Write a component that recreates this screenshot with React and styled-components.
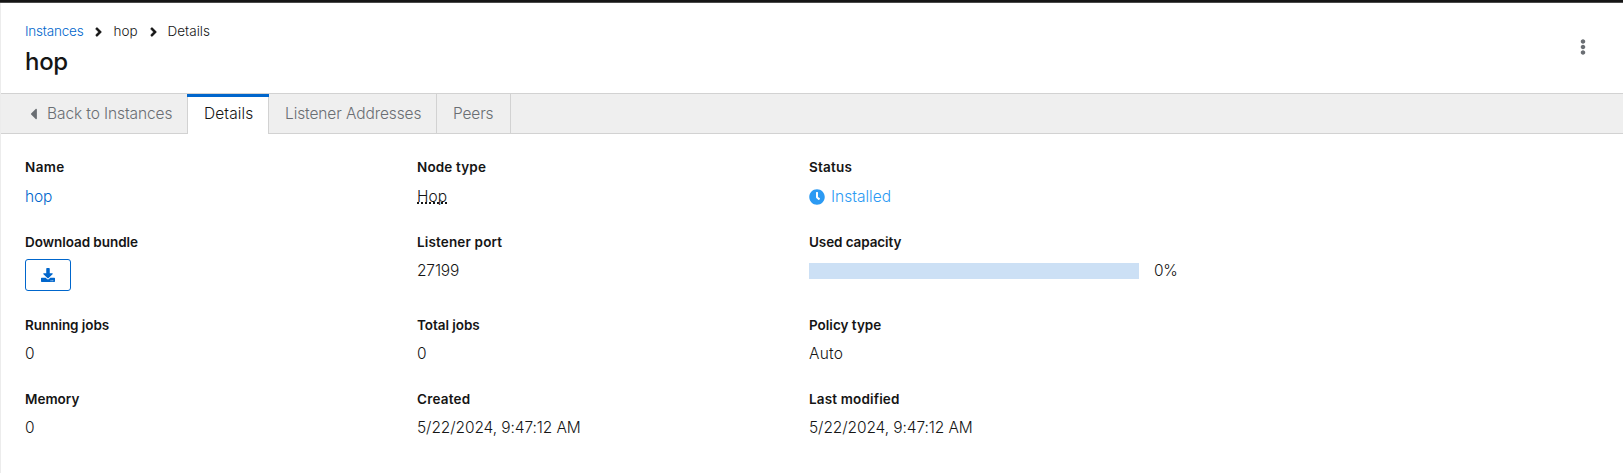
import React from 'react';
import styled, { createGlobalStyle } from 'styled-components';
import { FaAngleRight, FaCaretLeft, FaClock, FaDownload, FaEllipsisV } from 'react-icons/fa';

const GlobalStyle = createGlobalStyle`
  *, *::before, *::after { box-sizing: border-box; }
  body {
    margin: 0;
    background: #fff;
    color: #151515;
    font-family: Inter, "Liberation Sans", sans-serif;
    overflow: hidden;
  }
`;

const Page = styled.div`
  display: flex;
  flex-direction: column;
  height: 473px;
`;

const Masthead = styled.div`
  flex: none;
  height: 3px;
  background: #151515;
  border-bottom: 1px solid #4a4a4a;
`;

const Main = styled.main`
  flex: 1;
  border-left: 1px solid #ececec;
`;

const Header = styled.header`
  display: flex;
  justify-content: space-between;
  align-items: flex-start;
  height: 90px;
  padding: 18px 32px 0 24px;
`;

const Breadcrumb = styled.nav`
  display: flex;
  align-items: center;
  height: 21px;
  font-size: 13.5px;
  font-weight: 360;
  line-height: 21px;
`;

const Crumb = styled.span`
  color: ${({ $link }) => ($link ? '#06c' : '#151515')};
  letter-spacing: ${({ $track = 0 }) => $track}px;
`;

const Divider = styled(FaAngleRight)`
  width: 9px;
  height: 14px;
  margin: 0 ${({ $right }) => $right}px 0 ${({ $left }) => $left}px;
  stroke: #151515;
  stroke-width: 16;
`;

const Title = styled.h1`
  margin: 4px 0 0;
  font-size: 24px;
  font-weight: 450;
  line-height: 31px;
  letter-spacing: -0.3px;
`;

const KebabButton = styled.button`
  display: flex;
  margin-top: 18px;
  padding: 0;
  border: 0;
  background: none;
  color: #6a6e73;
  font-size: 16px;
`;

const Tabs = styled.div`
  display: flex;
  height: 41px;
  background: #efefef;
  border-top: 1px solid #d2d2d2;
  box-shadow: inset 0 -1px #d2d2d2;
`;

const Tab = styled.a`
  position: relative;
  display: flex;
  align-items: center;
  width: ${({ $width }) => $width}px;
  padding: 0 0 1px ${({ $indent = 16 }) => $indent}px;
  border-right: 1px solid #d2d2d2;
  color: ${({ $active }) => ($active ? '#151515' : '#6a6e73')};
  background: ${({ $active }) => ($active ? '#fff' : 'transparent')};
  font-size: 15.5px;
  font-weight: 300;
  letter-spacing: ${({ $track = 0 }) => $track}px;
  white-space: nowrap;

  &::before {
    content: '';
    display: ${({ $active }) => ($active ? 'block' : 'none')};
    position: absolute;
    inset: 0 -1px auto -1px;
    height: 3px;
    background: #06c;
  }
`;

const BackCaret = styled(FaCaretLeft)`
  width: 7px;
  height: 18px;
  margin-right: 10px;
`;

const Details = styled.dl`
  display: grid;
  grid-template-columns: repeat(3, 368px);
  grid-template-rows: 51px 59px 50px 50px;
  gap: 24px;
  margin: 0;
  padding: 23px 24px;
`;

const Group = styled.div`
  display: flex;
  flex-direction: column;
  align-items: flex-start;
  gap: ${({ $gap = 6 }) => $gap}px;
`;

const Label = styled.dt`
  font-size: 13.5px;
  font-weight: 600;
  line-height: 21px;
  letter-spacing: ${({ $track = 0 }) => $track}px;
`;

const Value = styled.dd`
  display: flex;
  align-items: center;
  margin: 0;
  color: ${({ $color = '#151515' }) => $color};
  font-size: 15.5px;
  font-weight: 300;
  line-height: 24px;
  letter-spacing: ${({ $track = 0 }) => $track}px;
`;

const Hint = styled.span`
  text-decoration: underline dotted 2px;
  text-underline-offset: 0;
  text-decoration-skip-ink: none;
`;

const StatusIcon = styled(FaClock)`
  width: 16px;
  height: 16px;
  margin-right: 6px;
  color: #2b9af3;
`;

const DownloadButton = styled.button`
  display: flex;
  align-items: center;
  justify-content: center;
  width: 46px;
  height: 33px;
  padding: 0;
  border: 1px solid #06c;
  border-radius: 3px;
  background: #fff;
  color: #06c;
  font-size: 14px;
`;

const CapacityTrack = styled.div`
  width: 330px;
  height: 16px;
  margin-right: 15px;
  background: #cce0f5;
`;

const Field = ({ label, track, gap, children }) => (
  <Group $gap={gap}>
    <Label $track={track}>{label}</Label>
    {children}
  </Group>
);

export default function App() {
  return (
    <Page>
      <GlobalStyle />
      <Masthead />
      <Main>
        <Header>
          <div>
            <Breadcrumb>
              <Crumb $link $track={-0.2}>Instances</Crumb>
              <Divider $left={11} $right={10} />
              <Crumb>hop</Crumb>
              <Divider $left={11} $right={10} />
              <Crumb>Details</Crumb>
            </Breadcrumb>
            <Title>hop</Title>
          </div>
          <KebabButton aria-label="Actions"><FaEllipsisV /></KebabButton>
        </Header>
        <Tabs>
          <Tab $width={187} $indent={29} $track={-0.1}><BackCaret />Back to Instances</Tab>
          <Tab $width={81} $active $track={0.1}>Details</Tab>
          <Tab $width={168} $track={-0.1}>Listener Addresses</Tab>
          <Tab $width={74} $track={-0.15}>Peers</Tab>
        </Tabs>
        <Details>
          <Field label="Name" track={0.4} gap={7}><Value $color="#06c" $track={-0.1}>hop</Value></Field>
          <Field label="Node type" track={0.15} gap={7}><Value><Hint>Hop</Hint></Value></Field>
          <Field label="Status" track={0.2} gap={7}>
            <Value $color="#2b9af3"><StatusIcon />Installed</Value>
          </Field>
          <Field label="Download bundle" track={-0.05}>
            <DownloadButton aria-label="Download bundle"><FaDownload /></DownloadButton>
          </Field>
          <Field label="Listener port" track={0.15}><Value $track={-0.15}>27199</Value></Field>
          <Field label="Used capacity" track={-0.1}>
            <Value $track={-0.2}><CapacityTrack />0%</Value>
          </Field>
          <Field label="Running jobs" track={-0.05}><Value>0</Value></Field>
          <Field label="Total jobs" track={-0.05}><Value>0</Value></Field>
          <Field label="Policy type"><Value $track={0.2}>Auto</Value></Field>
          <Field label="Memory"><Value>0</Value></Field>
          <Field label="Created" track={0.2}><Value $track={-0.1}>5/22/2024, 9:47:12 AM</Value></Field>
          <Field label="Last modified" track={0.15}><Value $track={-0.1}>5/22/2024, 9:47:12 AM</Value></Field>
        </Details>
      </Main>
    </Page>
  );
}
